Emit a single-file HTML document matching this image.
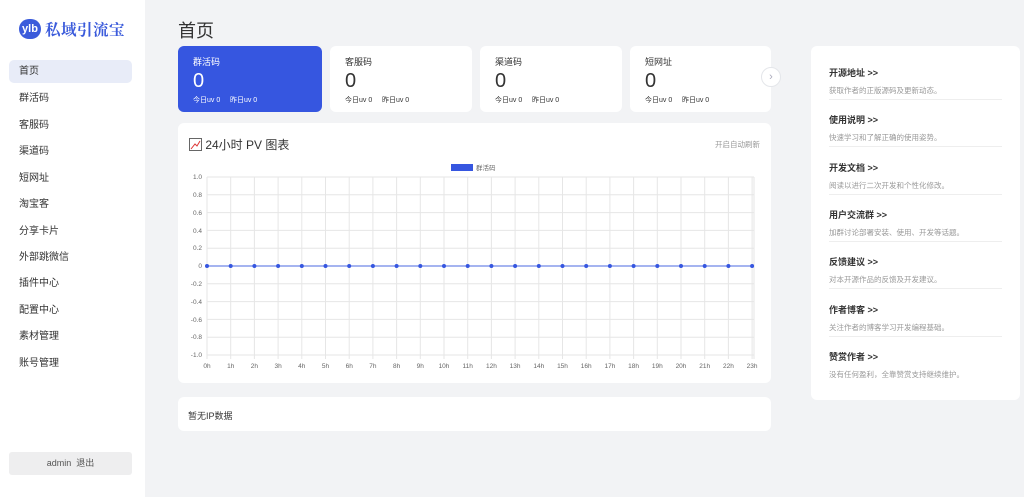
<!DOCTYPE html><html><head><meta charset="utf-8"><style>
*{margin:0;padding:0;box-sizing:border-box}
body{width:1024px;height:497px;background:#f2f3f5;font-family:"Liberation Sans","Noto Sans CJK SC",sans-serif;position:relative;overflow:hidden;color:#333}
.side{position:absolute;left:0;top:0;width:145px;height:497px;background:#fff}
.logo{position:absolute;left:19px;top:18px;display:flex;align-items:center}
.logo .b{width:22px;height:20px;background:#3b5bdb;border-radius:11px;color:#fff;font-size:11px;font-weight:bold;text-align:center;line-height:20px}
.logo span{font-family:"Noto Serif CJK SC",serif;color:#3b5bdb;font-size:15.5px;font-weight:bold;margin-left:4px;letter-spacing:0.5px}
.nav{position:absolute;left:9px;width:123px;height:23px;font-size:10px;line-height:23px;padding-left:10px;color:#333}
.nav.a{background:#e8ecf8;border-radius:5px}
.adm{position:absolute;left:9px;top:452px;width:123px;height:23px;background:#eeeeef;border-radius:3px;font-size:9px;text-align:center;line-height:23px;color:#555}
h1{position:absolute;left:178px;top:17px;font-size:18px;font-weight:normal;color:#333}
.card{position:absolute;background:#fff;border-radius:6px}
.st{top:46px;height:66px;padding:9px 15px}
.st .t{font-size:9px}.st .n{font-size:20px;margin-top:1px;line-height:24px}.st .u{font-size:7px;margin-top:2px}
.blue{background:#3656e0;color:#fff}
.rp .i{position:absolute;left:18px;width:173px;border-bottom:1px solid #eee;height:47px}
.rp .i b{display:block;font-size:9px;font-weight:bold;color:#333;margin-top:13px}
.rp .i p{font-size:7.5px;color:#999;margin-top:6px}
</style></head><body>
<div class="side">
<div class="logo"><div class="b">ylb</div><span>私域引流宝</span></div>
<div class="nav a" style="top:60px">首页</div>
<div class="nav" style="top:87px">群活码</div>
<div class="nav" style="top:114px">客服码</div>
<div class="nav" style="top:140px">渠道码</div>
<div class="nav" style="top:167px">短网址</div>
<div class="nav" style="top:193px">淘宝客</div>
<div class="nav" style="top:220px">分享卡片</div>
<div class="nav" style="top:246px">外部跳微信</div>
<div class="nav" style="top:272px">插件中心</div>
<div class="nav" style="top:299px">配置中心</div>
<div class="nav" style="top:325px">素材管理</div>
<div class="nav" style="top:352px">账号管理</div>
<div class="adm">admin &nbsp;退出</div>
</div>
<h1>首页</h1>
<div class="card st blue" style="left:178px;width:144px"><div class="t">群活码</div><div class="n">0</div><div class="u">今日uv 0 &nbsp;&nbsp;&nbsp; 昨日uv 0</div></div>
<div class="card st" style="left:330px;width:142px"><div class="t">客服码</div><div class="n">0</div><div class="u">今日uv 0 &nbsp;&nbsp;&nbsp; 昨日uv 0</div></div>
<div class="card st" style="left:480px;width:142px"><div class="t">渠道码</div><div class="n">0</div><div class="u">今日uv 0 &nbsp;&nbsp;&nbsp; 昨日uv 0</div></div>
<div class="card st" style="left:630px;width:141px"><div class="t">短网址</div><div class="n">0</div><div class="u">今日uv 0 &nbsp;&nbsp;&nbsp; 昨日uv 0</div></div>
<div style="position:absolute;left:761px;top:67px;width:20px;height:20px;border-radius:50%;background:#fff;border:1px solid #e4e6ea;color:#aab;font-size:11px;text-align:center;line-height:18px">›</div>
<div class="card" style="left:178px;top:123px;width:593px;height:260px">
<div style="position:absolute;left:11px;top:13px;font-size:12px;display:flex;align-items:center"><svg width="13" height="13" viewBox="0 0 13 13"><rect x="0.5" y="0.5" width="12" height="12" fill="none" stroke="#666"/><path d="M2 11 L6 6 L8 8 L11 3" stroke="#d33" fill="none"/></svg>&nbsp;24小时 PV 图表</div>
<div style="position:absolute;right:11px;top:16px;font-size:7.5px;color:#999">开启自动刷新</div>
</div>
<svg style="position:absolute;left:178px;top:123px" width="593" height="260" font-size="6.5" fill="#666" font-family="Liberation Sans">
<rect x="273" y="41" width="22" height="7" fill="#3656e0"/><text x="298" y="47" font-family="Noto Sans CJK SC">群活码</text>
<g stroke="#e6e6e6" stroke-width="1">
<line x1="29" y1="54" x2="576" y2="54"/><line x1="29" y1="71.8" x2="576" y2="71.8"/><line x1="29" y1="89.6" x2="576" y2="89.6"/><line x1="29" y1="107.4" x2="576" y2="107.4"/><line x1="29" y1="125.2" x2="576" y2="125.2"/><line x1="29" y1="143" x2="576" y2="143"/><line x1="29" y1="160.8" x2="576" y2="160.8"/><line x1="29" y1="178.6" x2="576" y2="178.6"/><line x1="29" y1="196.4" x2="576" y2="196.4"/><line x1="29" y1="214.2" x2="576" y2="214.2"/><line x1="29" y1="232" x2="576" y2="232"/>
</g>
<g id="v" stroke="#e6e6e6"></g>
<g text-anchor="end"><text x="24" y="56">1.0</text><text x="24" y="74">0.8</text><text x="24" y="92">0.6</text><text x="24" y="110">0.4</text><text x="24" y="127">0.2</text><text x="24" y="145">0</text><text x="24" y="163">-0.2</text><text x="24" y="181">-0.4</text><text x="24" y="199">-0.6</text><text x="24" y="216">-0.8</text><text x="24" y="234">-1.0</text></g>
<line x1="29" y1="143" x2="576" y2="143" stroke="#6f86e8" stroke-width="1.2"/>
<g id="p"></g>
<script>
(function(){var v=document.getElementById('v'),p=document.getElementById('p'),s=document.querySelector('svg[font-size="6.5"]'),ns='http://www.w3.org/2000/svg';
for(var i=0;i<24;i++){var x=29+i*23.7;var l=document.createElementNS(ns,'line');l.setAttribute('x1',x);l.setAttribute('x2',x);l.setAttribute('y1',54);l.setAttribute('y2',236);v.appendChild(l);
var c=document.createElementNS(ns,'circle');c.setAttribute('cx',x);c.setAttribute('cy',143);c.setAttribute('r',2);c.setAttribute('fill','#3656e0');p.appendChild(c);
var t=document.createElementNS(ns,'text');t.setAttribute('x',x);t.setAttribute('y',245);t.setAttribute('text-anchor','middle');t.textContent=i+'h';s.appendChild(t);}
var l2=document.createElementNS(ns,'line');l2.setAttribute('x1',576);l2.setAttribute('x2',576);l2.setAttribute('y1',54);l2.setAttribute('y2',236);v.appendChild(l2);})();
</script>
</svg>
<div class="card" style="left:178px;top:397px;width:593px;height:34px;font-size:9px;padding:12px 10px">暂无IP数据</div>
<div class="card rp" style="left:811px;top:46px;width:209px;height:354px">
<div class="i" style="top:7px"><b>开源地址 &gt;&gt;</b><p>获取作者的正版源码及更新动态。</p></div>
<div class="i" style="top:54px"><b>使用说明 &gt;&gt;</b><p>快速学习和了解正确的使用姿势。</p></div>
<div class="i" style="top:102px"><b>开发文档 &gt;&gt;</b><p>阅读以进行二次开发和个性化修改。</p></div>
<div class="i" style="top:149px"><b>用户交流群 &gt;&gt;</b><p>加群讨论部署安装、使用、开发等话题。</p></div>
<div class="i" style="top:196px"><b>反馈建议 &gt;&gt;</b><p>对本开源作品的反馈及开发建议。</p></div>
<div class="i" style="top:244px"><b>作者博客 &gt;&gt;</b><p>关注作者的博客学习开发编程基础。</p></div>
<div class="i" style="top:291px;border:none"><b>赞赏作者 &gt;&gt;</b><p>没有任何盈利，全靠赞赏支持继续维护。</p></div>
</div>
</body></html>
